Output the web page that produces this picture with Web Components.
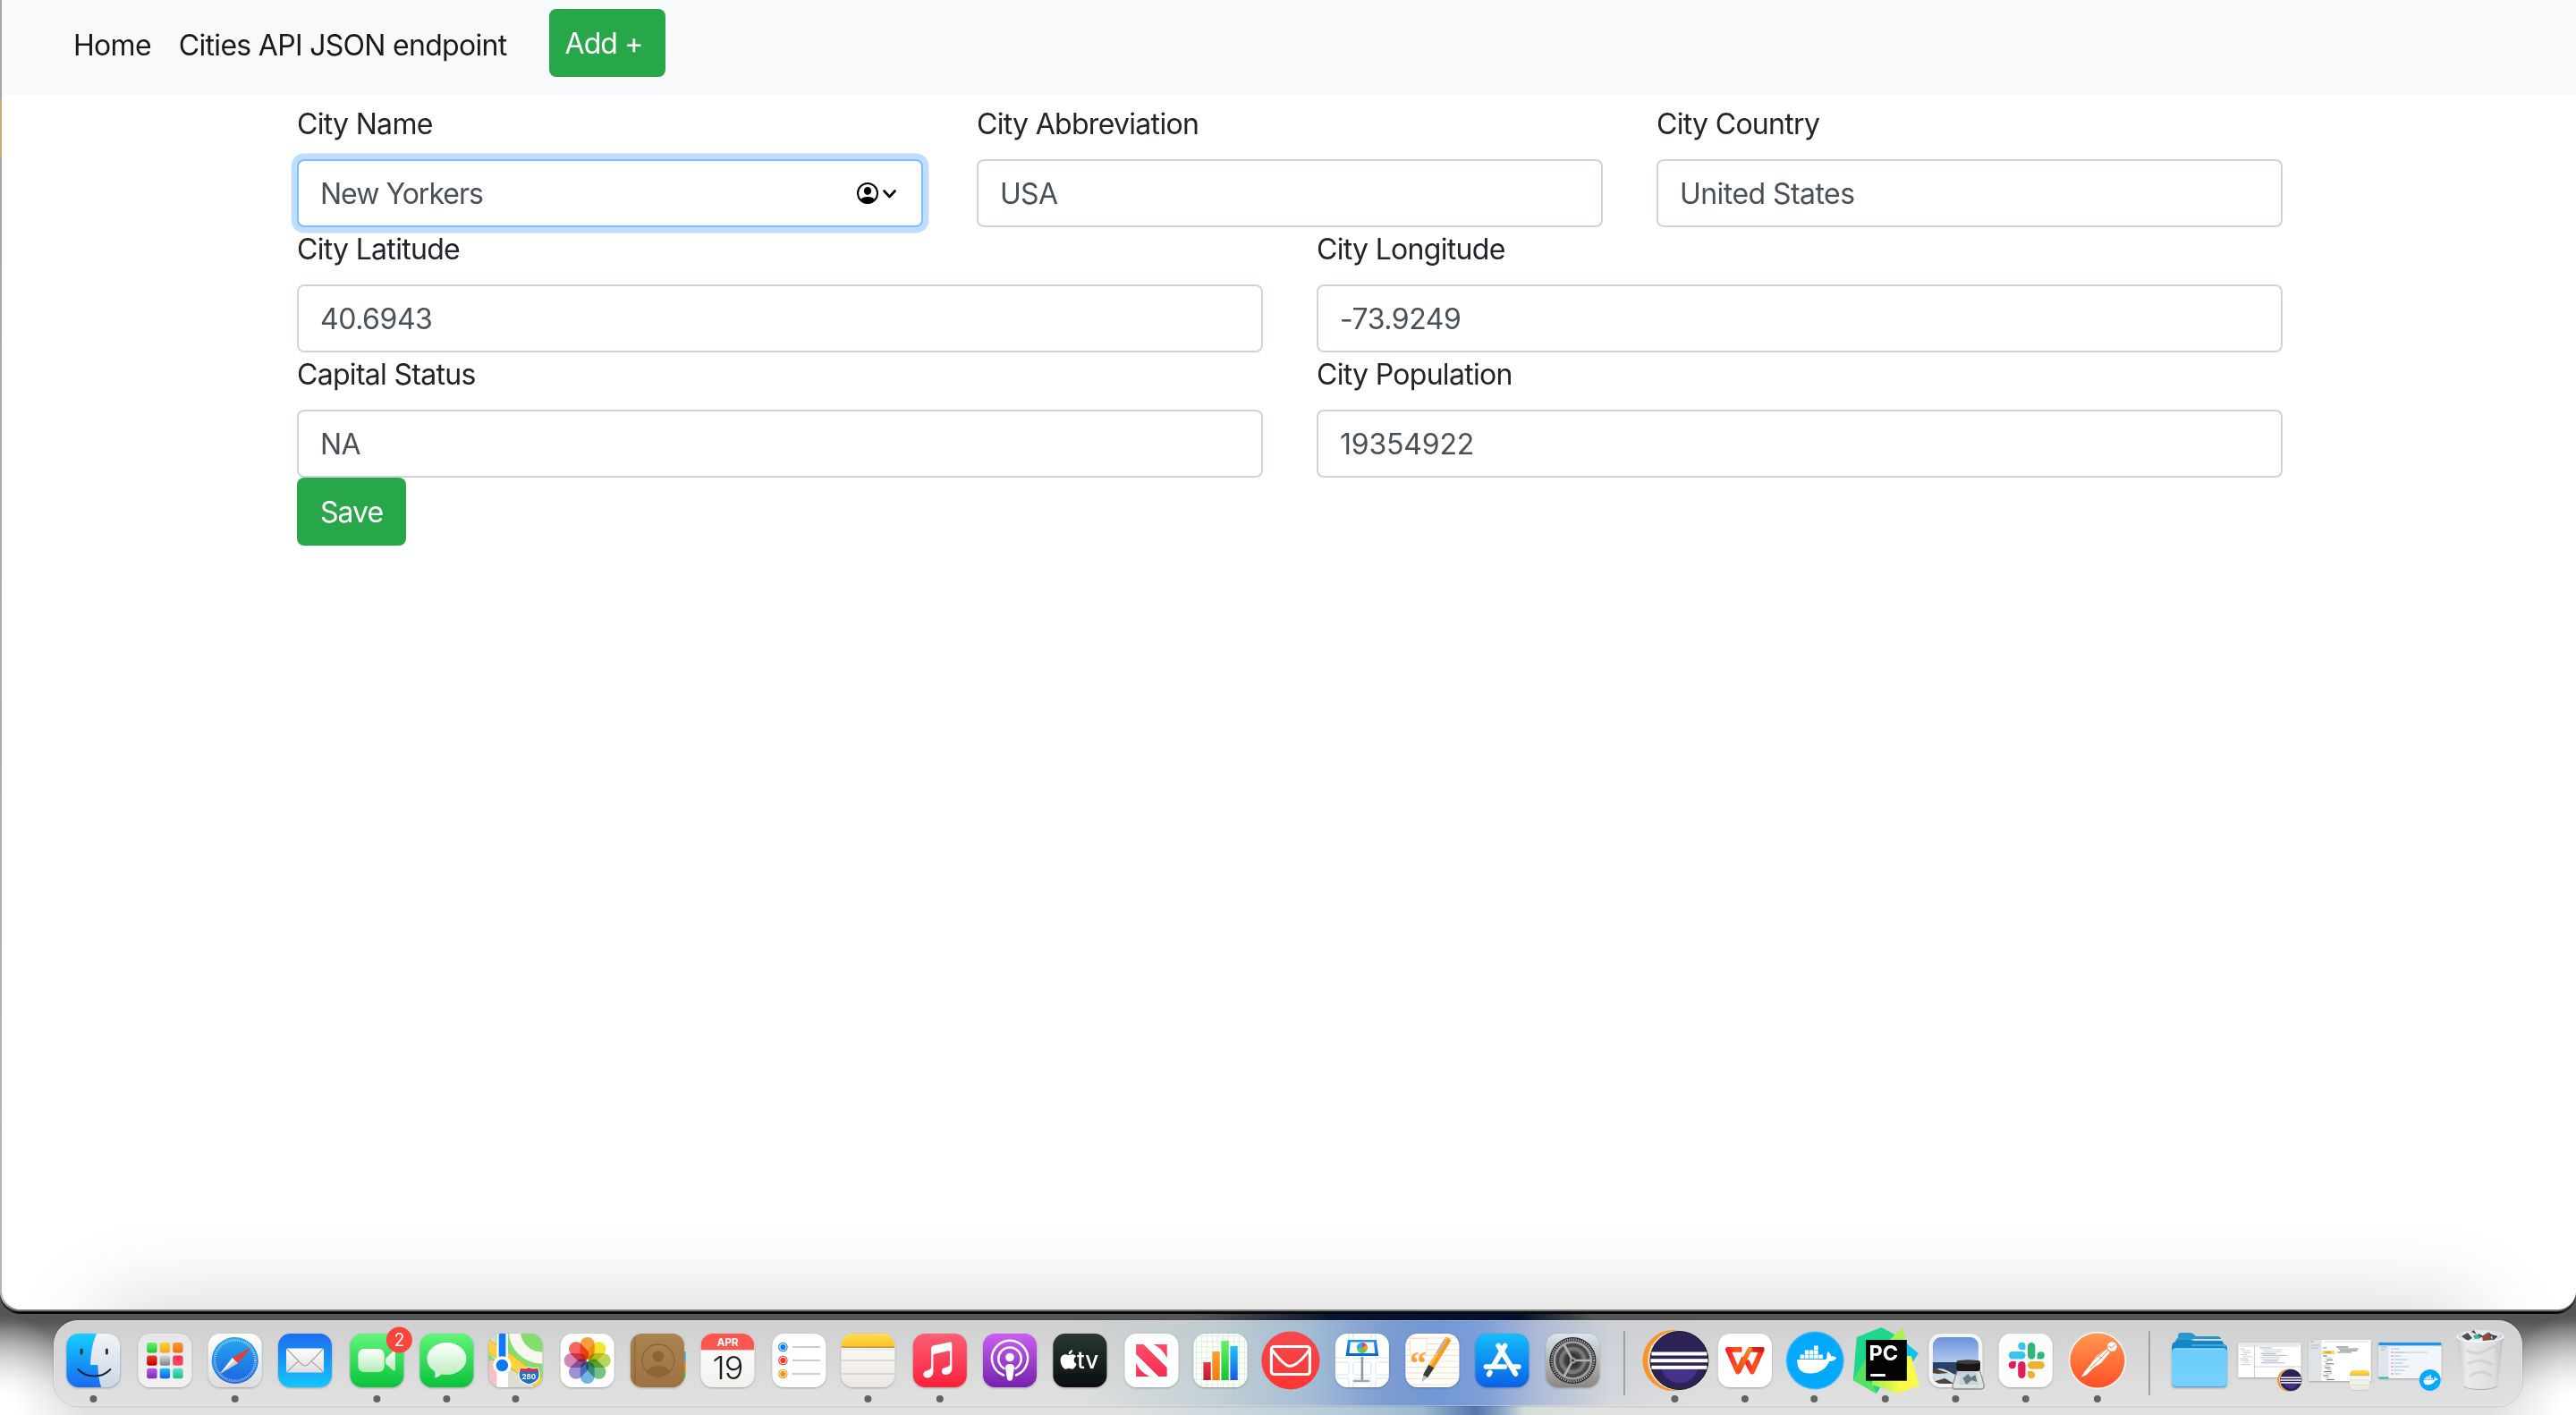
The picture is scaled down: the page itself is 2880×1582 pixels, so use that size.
<!DOCTYPE html>
<html lang="en">
<head>
<meta charset="utf-8">
<title>Cities</title>
<style>
html,body{margin:0;height:100%;overflow:hidden}
body{font-family:Inter,"Liberation Sans",sans-serif;font-size:32px;line-height:48px;color:#212529;letter-spacing:-.7px}
</style>
</head>
<body>
<desk-top>
  <app-window slot="window">
    <nav-bar>
      <nav-link>Home</nav-link>
      <nav-link>Cities API JSON endpoint</nav-link>
      <bs-button compact>Add +</bs-button>
    </nav-bar>
    <city-form>
      <form-row>
        <form-field label="City Name" value="New Yorkers" active style="--tracking:-1px"></form-field>
        <form-field label="City Abbreviation" value="USA" style="--tracking:-.7px"></form-field>
        <form-field label="City Country" value="United States" style="--tracking:-.55px"></form-field>
      </form-row>
      <form-row>
        <form-field label="City Latitude" value="40.6943"></form-field>
        <form-field label="City Longitude" value="-73.9249"></form-field>
      </form-row>
      <form-row>
        <form-field label="Capital Status" value="NA" style="--tracking:-.7px"></form-field>
        <form-field label="City Population" value="19354922" style="--tracking:-.2px"></form-field>
      </form-row>
      <bs-button>Save</bs-button>
    </city-form>
  </app-window>
  <mac-dock slot="dock">
    <dock-icon name="finder" running></dock-icon>
    <dock-icon name="launchpad" nudge="2"></dock-icon>
    <dock-icon name="safari" nudge="1.3" running></dock-icon>
    <dock-icon name="mail" nudge=".6"></dock-icon>
    <dock-icon name="facetime" nudge="2" running></dock-icon>
    <dock-icon name="messages" nudge="1" running></dock-icon>
    <dock-icon name="maps" running></dock-icon>
    <dock-icon name="photos" nudge="1.3"></dock-icon>
    <dock-icon name="contacts" nudge="1.5"></dock-icon>
    <dock-icon name="calendar"></dock-icon>
    <dock-icon name="reminders" nudge="1"></dock-icon>
    <dock-icon name="notes" running></dock-icon>
    <dock-icon name="music" nudge="1.4" running></dock-icon>
    <dock-icon name="podcasts" nudge=".6"></dock-icon>
    <dock-icon name="tv"></dock-icon>
    <dock-icon name="news" nudge="1"></dock-icon>
    <dock-icon name="numbers"></dock-icon>
    <dock-icon name="redmail" nudge="-.5"></dock-icon>
    <dock-icon name="keynote" nudge=".5"></dock-icon>
    <dock-icon name="pages"></dock-icon>
    <dock-icon name="appstore" nudge="-1"></dock-icon>
    <dock-icon name="settings"></dock-icon>
    <dock-separator></dock-separator>
    <dock-icon name="eclipse" running></dock-icon>
    <dock-icon name="wps" nudge="-.5" running></dock-icon>
    <dock-icon name="docker" nudge="-1.2" running></dock-icon>
    <dock-icon name="pycharm" nudge="-.6" running></dock-icon>
    <dock-icon name="preview" nudge="-1" running></dock-icon>
    <dock-icon name="slack" nudge="-1.6" running></dock-icon>
    <dock-icon name="postman" nudge="-.5" running></dock-icon>
    <dock-separator></dock-separator>
    <dock-icon name="folder" nudge=".6"></dock-icon>
    <dock-icon name="winEclipse"></dock-icon>
    <dock-icon name="winNotes" nudge=".8"></dock-icon>
    <dock-icon name="winDocker"></dock-icon>
    <dock-icon name="trash" nudge="-.5"></dock-icon>
  </mac-dock>
</desk-top>
<script>
function define(name, html) {
  customElements.define(name, class extends HTMLElement {
    constructor() {
      super();
      this.attachShadow({mode: 'open'}).innerHTML = typeof html === 'function' ? html(this) : html;
    }
  });
}

define('desk-top', `<style>
:host{display:flex;flex-direction:column;width:2880px;height:1582px;overflow:hidden;
 background:
 radial-gradient(ellipse 95px 112px at 0 1582px,#fff 20%,rgba(255,255,255,0) 100%),
 radial-gradient(ellipse 95px 112px at 2880px 1582px,#fff 20%,rgba(255,255,255,0) 100%),
 linear-gradient(90deg,transparent 1340px,rgba(0,14,44,.9) 1490px,rgba(0,14,44,.95) 1700px,transparent 1780px) 0 1469px/2880px 8px no-repeat,
 linear-gradient(90deg,transparent 1250px,rgba(190,208,218,.7) 1400px,#b5cbd9 1500px,#9db9cf 1590px,#5576ac 1650px,#8fa9c9 1680px,#d4dfd6 1705px,transparent 1780px) 0 1572px/2880px 10px no-repeat,
 linear-gradient(#565555 1466px,#565555 1477px,#8c8c8c 1505px,#d0d0d0 1550px,#dedede 1572px,#e2e2e2 1582px)}
</style><slot name="window"></slot><slot name="dock"></slot>`);

define('app-window', `<style>
:host{display:block;height:1469px;margin-bottom:7px;flex:none;border-radius:0 0 22px 22px;overflow:hidden;
 background:linear-gradient(#a6a6a6 0,#a6a6a6 112px,#c3b27f 112px,#c3b27f 176px,#a6a6a6 176px,#a9a9a9 1445px,#232324 1452px,#232324 1466px,#080808 1467px)}
.rim{height:1466px;border-radius:0 0 22px 22px;background:linear-gradient(#a6a6a6 0,#a6a6a6 112px,#c3b27f 112px,#c3b27f 176px,#a6a6a6 176px,#b5b5b5 1455px,#77787a 1465px)}
.page{box-sizing:border-box;position:relative;height:1464px;margin-left:2px;border-radius:0 0 21px 21px;overflow:hidden;background:#fff}
.page::after{content:"";position:absolute;left:110px;right:110px;bottom:-80px;height:80px;box-shadow:0 0 100px rgba(0,0,0,.2)}
</style><div class="rim"><div class="page"><slot></slot></div></div>`);

define('nav-bar', `<style>
:host{display:flex;align-items:flex-start;box-sizing:border-box;height:106px;padding:10px 80px;background:#f8f9fb;color:#191919}
</style><slot></slot>`);
define('nav-link', `<style>:host{display:block;padding:17px 0 15px;margin-right:31px;white-space:nowrap}
:host(:nth-of-type(2)){margin-right:47px}</style><slot></slot>`);
define('bs-button', `<style>
:host{display:block;box-sizing:border-box;width:max-content;height:76px;padding:15px 26px 13px;border-radius:8px;background:#28a74a;color:#fff;white-space:nowrap;letter-spacing:-1px}
:host([compact]){padding:15px 0 13px 18px;width:130px;letter-spacing:-.9px}
</style><slot></slot>`);
define('city-form', `<style>:host{display:block;padding:8px 0 0 330px;width:2220px}</style><slot></slot>`);
define('form-row', `<style>:host{display:flex;gap:60px}</style><slot></slot>`);
define('form-field', el => `<style>
:host{display:block;flex:1 1 0;min-width:0}
label{display:block;padding-top:1px;margin-bottom:15px}
.box{display:flex;align-items:center;justify-content:space-between;box-sizing:border-box;height:76px;padding:0 28px 0 24px;border:2px solid #ced4da;border-radius:8px;background:#fff;color:#495057}
.box span{padding-top:2px;letter-spacing:var(--tracking,-.45px)}
:host([active]) .box{border-color:#80bdff;box-shadow:0 0 0 6.4px #bfdeff}
</style><label>${el.getAttribute('label')}</label><div class="box"><span>${el.getAttribute('value')}</span>${el.hasAttribute('active') ? `
<svg width="46" height="26" viewBox="0 0 46 26"><defs><clipPath id="p"><circle cx="14" cy="13" r="11.5"/></clipPath></defs>
<circle cx="14" cy="13" r="11" fill="#fff" stroke="#000" stroke-width="2"/><ellipse cx="14" cy="10.4" rx="4.1" ry="4.5"/><ellipse cx="14" cy="21.6" rx="8.2" ry="4.7" clip-path="url(#p)"/>
<path d="M32.500 10.500 38.500 17 44.500 10.500" fill="none" stroke="#000" stroke-width="2.600" stroke-linecap="round" stroke-linejoin="round"/></svg>` : ''}</div>`);

define('mac-dock', `<style>
:host{display:flex;box-sizing:border-box;width:2760px;height:96px;margin-left:60px;padding-left:4.6px;flex:none;border-radius:27px;
 box-shadow:inset 0 0 0 1px rgba(255,255,255,.3),0 0 2px rgba(0,0,0,.35);
 background:linear-gradient(90deg,transparent 1130px,rgba(184,202,208,.7) 1300px,rgba(160,186,212,.9) 1400px,#7c9cd2 1490px,#7297d4 1550px,#7f9fd8 1600px,rgba(170,184,214,.9) 1660px,rgba(200,206,214,.5) 1740px,transparent 1860px),linear-gradient(#d0d0d0,#e1e1e1)}
</style><slot></slot>`);
define('dock-separator', `<style>:host{display:flex;flex:none;width:34.600px;height:96px;align-items:center;justify-content:center}
i{width:2px;height:72px;margin-left:2px;background:#a0a1a3}</style><i></i>`);

const grad = (id, a, b) => `<linearGradient id="${id}" x1="0" y1="0" x2="0" y2="1"><stop stop-color="${a}"/><stop offset="1" stop-color="${b}"/></linearGradient>`;
const tile = fill => `<rect x="-30" y="-30" width="60" height="60" rx="13.500" fill="${fill}" filter="url(#sh)"/>`;
const line = (x1, y1, x2, y2, c, w) => `<path d="M${x1} ${y1}L${x2} ${y2}" stroke="${c}" stroke-width="${w}"/>`;
const range = (n, f) => Array.from({length: n}, (_, i) => f(i)).join('');

const eclipse = `<circle cx="-2" cy="0" r="34" fill="#f7952c"/><circle cx="3" cy="0" r="33.300" fill="#e9dccb"/>
<circle cx="5" cy="0" r="32.500" fill="#2c2255" stroke="#15121f" stroke-width="1"/><path d="M-15 9H26A21 21 0 0 1 -15 9Z" fill="#463188"/>
<g fill="#fff"><rect x="-26" y="-9.500" width="62" height="4"/><rect x="-27" y="-1.800" width="64" height="4"/><rect x="-26" y="5.800" width="62" height="4"/></g>`;
const docker = `<circle cx="1" cy="0" r="32.500" fill="#3cb8f8"/><circle cx="1" cy="0" r="31" fill="#03a9fd"/>
<path fill="#fff" d="M-19-1H12C16-1 13-6 15.500-10 18-8 19-6 19-4.500 22-5.500 24-4 25-3 24 0 20 1 17 1 14 9 6 14.500-5 14.500-15 14.500-19 9-19-1Z"/>
<g fill="#fff">${range(5, i => `<rect x="${-15.700 + i * 5.200}" y="-6.500" width="4.600" height="4.600"/>`)}${range(3, i => `<rect x="${-10.500 + i * 5.200}" y="-11.500" width="4.600" height="4.600"/>`)}<rect x="-.1" y="-16.500" width="4.600" height="4.600"/></g>`;
const notes = `${grad('nb', '#fefefe', '#ebe8e0')}${grad('ny', '#ffdb52', '#fdc322')}${tile('url(#nb)')}<g clip-path="url(#c)"><rect x="-30" y="-30" width="60" height="15" fill="url(#ny)"/><rect x="-30" y="-15.500" width="60" height="1.500" fill="#b99a4a"/>
<path d="M-30-12H30" stroke="#bbb" stroke-width="1" stroke-dasharray="1 1.500"/>${line(-30, 0, 30, 0, '#d2d1cd', 1.500)}${line(-30, 15, 30, 15, '#d2d1cd', 1.500)}</g>`;
const petals = ['#f98a10', '#f3dc06', '#a9cf34', '#57b46a', '#55a3dc', '#8a7cc8', '#cc6aa6', '#f4423a'];
const tinyRows = (x, y, n, step, w, cols) => range(n, i => line(x + (i * 7) % 5, y + i * step, x + (i * 7) % 5 + w * (0.5 + ((i * 37) % 50) / 100), y + i * step, cols[i % cols.length], 0.9));

const ICONS = {
finder: () => `${grad('a', '#12cefc', '#1c69f3')}${grad('b', '#f2f3f7', '#cdd7e5')}${tile('url(#a)')}<path clip-path="url(#c)" fill="url(#b)" d="M3.700-30C-1-20-3-8-3.300 5H5C5 14 6.500 23 8.700 30H31V-31Z"/>
<path d="M-13.300-12V-8M15-12V-8" stroke="#26303f" stroke-width="3" stroke-linecap="round"/><path d="M-17 10C-8 20 10 20 19 10" fill="none" stroke="#1c2533" stroke-width="2" stroke-linecap="round"/>`,
launchpad: () => `${grad('a', '#e6e6e8', '#f2f2f2')}${tile('url(#a)')}` + [['#6ff06a', '#1fc53a'], ['#fcd02f', '#f9a91b'], ['#fb9a25', '#ee6f1c'], ['#f0382b', '#b80000'], ['#cfdde0', '#7c7f80'], ['#fb2c5c', '#fb4a62'], ['#b95ce0', '#7a2bb0'], ['#16c3fa', '#1d5ae8'], ['#55e0cc', '#1dbb88']].map((g, i) => grad('g' + i, ...g) + `<rect x="${-20.200 + (i % 3) * 14.500}" y="${-20 + Math.floor(i / 3) * 14.400}" width="11.400" height="11.400" rx="2.500" fill="url(#g${i})"/>`).join(''),
safari: () => `${grad('a', '#fff', '#dcdcdc')}${grad('b', '#23a9ee', '#1e63df')}${tile('url(#a)')}<circle r="26" fill="url(#b)"/><circle r="22.800" fill="none" stroke="#d8ecfb" stroke-width="3" stroke-dasharray=".8 1.190" opacity=".75"/>
<path d="M18.700-15-3-3 3 3Z" fill="#ee3a30"/><path d="M-17 15-3-3 3 3Z" fill="#f4f4f4"/><path d="M-17 15 0 0 3 3Z" fill="#cfcfcf"/>`,
mail: () => `${grad('a', '#1b6cf1', '#15c5fd')}${grad('b', '#fdfdfd', '#dedede')}${tile('url(#a)')}<rect x="-21" y="-13.500" width="42" height="27" rx="2" fill="url(#b)"/><path d="M-20 12.500-7.500 1M20 12.500 7.500 1M-20-12.500-4 4Q0 7.500 4 4L20-12.500" fill="none" stroke="#a6a6a6" stroke-width="1.100"/>`,
facetime: () => `${grad('a', '#62f57c', '#0ac23a')}${grad('b', '#fff', '#b2ecb8')}${tile('url(#a)')}<rect x="-21" y="-13" width="29.300" height="26" rx="6.500" fill="url(#b)"/><path d="M10-2.500 18-10Q20.500-11.500 20.500-9V10Q20.500 12.500 18 11L10 4Q9 1 10-2.500Z" fill="url(#b)"/>
<circle cx="25" cy="-23" r="14.500" fill="#fd443a"/><text x="25" y="-16" text-anchor="middle" font-size="19.500" fill="#fff" letter-spacing="0">2</text>`,
messages: () => `${grad('a', '#60f57a', '#0ac23a')}${grad('b', '#fff', '#bfeec2')}${tile('url(#a)')}<path d="M-14 10Q-12 16-13.500 19.500-8 18.500-5 14Z" fill="#ddf5df"/><ellipse cy="-2" rx="22" ry="18" fill="url(#b)"/>`,
maps: () => `${tile('#7ddc6a')}<g clip-path="url(#c)"><rect x="-30" y="-30" width="60" height="60" fill="#84dd6c"/><path d="M-30-30H-22V0L-30-8Z" fill="#dcdad4"/><path d="M-30 0H-20V30H-30Z" fill="#f7bfc8"/><path d="M-9 8 30 30H-9Z" fill="#dedcd3"/>
<circle cx="29" cy="-33" r="30" fill="none" stroke="#f7f6f0" stroke-width="13"/><path d="M-33-18-9-2 36 32" stroke="#f3b51e" stroke-width="13" fill="none"/><path d="M-33-18-9-2 36 32" stroke="#fed23f" stroke-width="11" fill="none"/>
<rect x="-21" y="-31" width="12.500" height="62" fill="#fff"/><rect x="-18.700" y="-31" width="7.700" height="34" fill="#0a7bf5"/></g><circle cx="-15" cy="5.500" r="10.200" fill="#fff"/><circle cx="-15" cy="5.500" r="6.700" fill="#0a7bf5"/>
<path d="M6 8Q11 10 15 7.500 19 10 24.500 8 28 14 26 20 23 25 15 27 7 25 4.500 20 2 14 6 8Z" fill="#1f70c9" stroke="#fff" stroke-width="1.200"/><path d="M6 8.500Q11 10.500 15 8 19 10.500 24.500 8.500L26 12.500H4.500Z" fill="#e0312c"/><text x="15" y="21" text-anchor="middle" font-size="8" font-weight="700" fill="#fff" letter-spacing="0">280</text>`,
photos: () => tile('#fff') + `<g style="isolation:isolate">${petals.map((c, i) => `<rect x="-8" y="-26" width="16" height="25" rx="8" fill="${c}" opacity=".82" style="mix-blend-mode:multiply" transform="rotate(${i * 45})"/>`).join('')}</g>`,
contacts: () => `${grad('a', '#ab8350', '#9c7341')}<path d="M26-10H31V1H26Z" fill="#55b7ea"/><path d="M26 1H31V13H26Z" fill="#f79a28"/><path d="M26 13H31Q31 22 26 24Z" fill="#4fd06d"/><path d="M26-22Q31-18 31-10H26Z" fill="#ddd"/>
<rect x="-31" y="-30" width="60" height="60" rx="13" fill="url(#a)" filter="url(#sh)"/><path d="M-26-26V26" stroke="#8a6435" stroke-width="1.200"/><g fill="#8a6538"><circle cx="0" cy="-4.500" r="6.300"/><path d="M-13.500 11.500Q0 .500 13.500 11.500Q0 24-13.500 11.500Z"/></g><circle r="18" fill="none" stroke="#8a6538" stroke-width="1.300"/>`,
calendar: () => `${grad('a', '#fff', '#f1f1ee')}${tile('url(#a)')}<rect x="-30" y="-30" width="60" height="18.300" fill="#fb564f" clip-path="url(#c)"/><text y="-15.800" text-anchor="middle" font-size="12" font-weight="700" fill="#fff" letter-spacing="-.2">APR</text><text y="20.500" text-anchor="middle" font-size="36" font-weight="300" fill="#1e1e1e" letter-spacing="-1">19</text>`,
reminders: () => tile('#fff') + [['#0a7bf5', -15], ['#fb3128', 0], ['#f99408', 15]].map(([c, y]) => `<circle cx="-18" cy="${y}" r="4.700" fill="none" stroke="${c}" stroke-width="1.100"/><circle cx="-18" cy="${y}" r="3.100" fill="${c}"/>${line(-7.500, y, 23.500, y, '#c4c4c8', 1.700)}`).join(''),
notes: () => notes,
music: () => `${grad('a', '#fc5e76', '#fa223a')}${tile('url(#a)')}<path fill="#fff" d="M-9.700-13.500Q-9.700-16-7.500-16.500L11-20.400Q13.500-21 13.500-18.500V9.500C13.500 17 2 18 2 12 2 6.500 11.200 8.500 11.200 4.500V-9.500Q11.200-11 9.800-10.700L-6-7.300Q-7.400-7-7.400-5.500V12.500C-7.400 21-18.500 21.500-18.500 15.500-18.500 10-9.700 12-9.700 7.500Z"/>`,
podcasts: () => `${grad('a', '#ca5ff1', '#7422ad')}${tile('url(#a)')}<g fill="none" stroke="#fff" stroke-width="2.500" stroke-linecap="round"><path d="M-7 16.500A20 20 0 1 1 7 16.500"/><path d="M-6.500 9A12.700 12.700 0 1 1 6.500 9"/></g><circle cy="-3.500" r="4.800" fill="#fff"/><path d="M-5 8Q-5 4 0 4 5 4 5 8L3.200 20Q2.700 22.700 0 22.700-2.700 22.700-3.200 20Z" fill="#fff"/>`,
tv: () => `${grad('a', '#2a3833', '#0a0e10')}${tile('url(#a)')}<path transform="translate(-22 -13.400) scale(.048)" fill="#fff" d="M318.700 268.700c-.2-36.700 16.400-64.400 50-84.800-18.800-26.900-47.200-41.700-84.700-44.600-35.500-2.800-74.300 20.700-88.500 20.700-15 0-49.400-19.700-76.400-19.700C63.300 141.200 4 184.800 4 273.500q0 39.300 14.400 81.200c12.800 36.700 59 126.700 107.200 125.200 25.200-.6 43-17.900 75.800-17.900 31.800 0 48.300 17.900 76.400 17.900 48.600-.7 90.400-82.500 102.600-119.300-65.200-30.700-61.700-90-61.700-91.900zm-56.600-164.200c27.300-32.400 24.800-61.900 24-72.500-24.100 1.400-52 16.400-67.900 34.900-17.500 19.800-27.800 44.300-25.600 71.900 26.100 2 49.900-11.400 69.500-34.300z"/><text x="-3.500" y="9" font-size="26" font-weight="500" fill="#fff" letter-spacing="0">tv</text>`,
news: () => `${grad('a', '#fb4e6a', '#f92c50')}${tile('#fff')}<g fill="url(#a)"><path d="M-17.300-18H-9L17.300 8V18H8L-17.300-7Z"/><path d="M2-18H17.300V-2.500Q13-13 2-18Z"/><path d="M-17.300 2.500V18H-2Q-13 13-17.300 2.500Z"/></g>`,
numbers: () => tile('#fff') + `<g clip-path="url(#c)">${range(10, i => line(-27 + i * 6, -30, -27 + i * 6, 30, '#d3f2d4', .9) + line(-30, -27 + i * 6, 30, -27 + i * 6, '#d3f2d4', .9))}</g>${[['#e8394c', '#b91d33', 2], ['#fba02c', '#f27a12', -10], ['#6af06a', '#12c432', -22], ['#1fc6fb', '#1656e6', -16]].map(([a, b, y], i) => grad('n' + i, a, b) + `<rect x="${-19 + i * 10}" y="${y}" width="8.300" height="${22 - y}" fill="url(#n${i})"/>`).join('')}`,
redmail: () => `${grad('a', '#f34a4c', '#ff3433')}<circle r="32.500" fill="url(#a)"/><rect x="-21.500" y="-15.500" width="43" height="31" rx="3" fill="none" stroke="#fff" stroke-width="3.200"/><path d="M-21-12Q-8 5-2 6.200 1 6.800 4 5 12 1 21-12" fill="none" stroke="#fff" stroke-width="3"/>`,
keynote: () => `${grad('a', '#2596f3', '#0b63cf')}${tile('#fff')}<g clip-path="url(#c)" fill="none" stroke="#cfe4f6" stroke-width="1"><rect x="-10" y="-16" width="20" height="14" rx="2"/><rect x="-10" y="2" width="20" height="14" rx="2"/><rect x="-40" y="2" width="25" height="14" rx="2"/><rect x="15" y="2" width="25" height="14" rx="2"/><path d="M-10 30V22Q-10 20-8 20H8Q10 20 10 22V30M-30 20H-15V30M30 20H15V30M-15-30V-3H-30M15-30V-3H30M-10-30V-24M10-30V-24"/></g>
<rect x="-1.300" y="-4" width="2.600" height="26" fill="#8f959c"/><rect x="-10" y="21.800" width="18.500" height="2.400" rx="1" fill="#a4a8ad"/><path d="M-16-23H16L18.300-5H-18.300Z" fill="url(#a)"/><path d="M-13-20.500H13L14.500-8H-14.500Z" fill="#f5fafe"/>
<circle cy="-14" r="6" fill="#5ac85a"/><path d="M0-14V-20A6 6 0 0 1 5.500-11.500Z" fill="#fb9a2a"/><path d="M0-14H-6A6 6 0 0 1 0-20Z" fill="#38a6ee"/><path d="M0-14V-20A6 6 0 0 1 5-17Z" fill="#d8456c"/>`,
pages: () => tile('#fff') + `<g clip-path="url(#c)">${range(9, i => line(-30, -25 + i * 6.500, 30, -25 + i * 6.500, '#fbdcc0', 1))}<rect x="-25" y="-24.500" width="18.500" height="17.500" fill="#fff" stroke="#fbdcc0" stroke-width="1"/></g><text x="-25.500" y="16" font-family="Liberation Serif" font-size="38" font-weight="700" fill="#fba13a" letter-spacing="0">“</text>
<g transform="translate(17.700 -24) rotate(31.500)"><rect x="-3.600" y="-1" width="7.200" height="39" rx="2" fill="#f69c1c"/><rect x="-3.600" y="0" width="2.600" height="37" fill="#fcc35c"/><rect x="-3.600" y="2" width="2.200" height="18" fill="#a9b3bb"/><path d="M-3.600 36H3.600L3 49H-3Z" fill="#3b3b3d"/><path d="M-2.600 49H2.600L0 57Z" fill="#b9bdc1"/></g>`,
appstore: () => `${grad('a', '#12bdfb', '#1060e8')}${tile('url(#a)')}<g stroke="#fff" stroke-width="5.600" stroke-linecap="round" fill="none"><path d="M3.200-16.500-9.500 5.500M-4.200-16.500 15 15M-18 7H3M12 7H18.500M-13.500 13.500-14.700 15.500"/></g>`,
settings: () => `${grad('a', '#d9e6ec', '#8c8680')}${tile('url(#a)')}<circle r="26" fill="#2a2b2d"/><circle r="23.500" fill="none" stroke="#a7a7a7" stroke-width="2.600" stroke-dasharray="1.300 1.160"/><circle r="20.500" fill="#4a4a4a" stroke="#a2a2a2" stroke-width="2.600"/><circle r="13" fill="none" stroke="#777" stroke-width="4.500"/><circle r="8" fill="#353536"/><path d="M0 0H20M0 0-10-18M0 0-10 18" stroke="#b3b3b3" stroke-width="2.600"/><circle r="3.500" fill="#9b9b9b"/><circle r="1.300" fill="#222"/>`,
eclipse: () => eclipse,
wps: () => `<linearGradient id="w"><stop stop-color="#fd1f2b"/><stop offset=".55" stop-color="#f85a1c"/><stop offset="1" stop-color="#fb2a1e"/></linearGradient>${grad('w2', '#f98a2a', '#fb4215')}${tile('#fff')}
<path d="M-3.500-12.200H-19L-8 12.500-1-3" fill="none" stroke="url(#w)" stroke-width="5.800" stroke-linejoin="round"/><path d="M4-12.200H19L8 12.500 1.500 0" fill="none" stroke="url(#w)" stroke-width="5.800" stroke-linejoin="round"/><path d="M-10.500 12.500 2-12Q3.500-15 7-15H9.500L-5 14Z" fill="url(#w2)"/><path d="M7-15H21L20-9.300H10Z" fill="#b01414" opacity=".65"/>`,
docker: () => docker,
pycharm: () => `<linearGradient id="b"><stop stop-color="#9df04e"/><stop offset=".6" stop-color="#fbf84c"/></linearGradient><path d="M-32-26-4.500-37 14-27 5 15-10 37-36 22Z" fill="#1dd88c"/><path d="M-36 22-21-3V22L-14 27-10 37Z" fill="#55e25e"/><path d="M19-37 23-22H4Z" fill="#a9f052"/><path d="M20-22 37-8 28 6 18 10Z" fill="#08c4ee"/><path d="M24-5H29L38 28 14 37-15 27V20H24Z" fill="url(#b)"/>
<rect x="-21.700" y="-23" width="45.700" height="45.700" fill="#050505"/><rect x="-16.500" y="15" width="16.500" height="3" fill="#fff"/><text x="-18.300" y="0" font-size="23.500" font-weight="700" fill="#fff" letter-spacing="0">PC</text>`,
preview: () => `${grad('a', '#6b93d8', '#b4cbef')}${tile('#f4f4f4')}<clipPath id="k"><rect x="-25.500" y="-26" width="51" height="52" rx="9"/></clipPath><g clip-path="url(#k)"><rect x="-26" y="-26" width="52" height="29" fill="url(#a)"/><rect x="-26" y="2" width="52" height="25" fill="#27416f"/><path d="M-26 12Q-18 6-8 12T10 18L26 12V27H-26Z" fill="#cfdfe8"/><path d="M-26 8-14 12-8 14-20 15-26 14ZM-26 24-12 20-2 26H-26ZM-8 7 2 10-6 12Z" fill="#4f4238"/></g>
<path d="M2 11H27L32 28Q32 32 28 32H0Q-4 32-3.500 28Z" fill="#dfe3e3" opacity=".88" stroke="#858889" stroke-width="1.300"/><path d="M6 14H23L26 27H3Z" fill="#c9d3d7"/><path d="M8 20 14 15 17 19 22 16 24 24 18 22 12 27Z" fill="#485d6d" opacity=".75"/><rect x="1" y="0" width="26.500" height="12" rx="3" fill="#161616"/><ellipse cx="14.200" cy="1.800" rx="13" ry="2.500" fill="#3c3c3c"/>`,
slack: () => tile('#fcfcfc') + `<g fill="#36c5f0"><rect x="-19" y="-10" width="18.700" height="8.400" rx="4.200"/><path d="M-.3-12H-4.500A4.100 4.100 0 1 1-.3-16Z"/></g><g fill="#2eb67d"><rect x="2.200" y="-20" width="8.300" height="18.600" rx="4.150"/><path d="M12.800-1.500V-5.500A4.100 4.100 0 1 1 17-1.500Z"/></g><g fill="#ecb22e"><rect x="2.200" y="1" width="18.800" height="8.500" rx="4.200"/><path d="M2.200 12H6.300A4.100 4.100 0 1 1 2.200 16Z"/></g><g fill="#e01e5a"><rect x="-8.600" y="1" width="8.300" height="19" rx="4.150"/><path d="M-11 1V5A4.100 4.100 0 1 1-15 1Z"/></g>`,
postman: () => `${grad('a', '#ff9850', '#ff5026')}<circle r="32.300" fill="#fdf3ee"/><circle r="30.500" fill="url(#a)"/><circle cx="16.500" cy="-15.500" r="5.300" fill="#fff"/><path d="M12-16 16-14 20-18" stroke="#ff7d45" stroke-width="1" fill="none"/><path d="M10-13 14-9 4 3-4 8-12 16-18 18.500-14 12-8 5-1-5Z" fill="#fff"/><path d="M12-11-8 9M10-13-6 1M2-5 5-2" stroke="#ff7d45" stroke-width="1"/>`,
folder: () => `${grad('a', '#6ccbfa', '#76d2fc')}<path d="M-24-28Q-24-31-20-31H-11Q-8-31-6-29L-4-27H20Q24-27 24-24H-24Z" fill="#2a97cf"/><path d="M-27-20Q-27-25-23-25H-11L-6-22H23Q27-22 27-18V-10H-27Z" fill="#1384c5"/><path d="M-27-21Q-26-24-22-24H-11L-7-22" fill="none" stroke="#4fb4e6" stroke-width="1"/><path d="M-31-14Q-31-21-26-21H-12L-7-18H27Q31-18 31-13V0H-31Z" fill="#1089cb"/><path d="M-9-17H26Q29-17 29-15" fill="none" stroke="#6cc5ef" stroke-width="1.200"/><rect x="-31" y="-13.500" width="62" height="43.500" rx="4" fill="url(#a)" filter="url(#sh)"/><path d="M-28-13H28" stroke="#b5e6fd" stroke-width="1"/><path d="M-30 27Q-29 29.500-26 29.500H26Q29 29.500 30 27" stroke="#4aa9d9" stroke-width="1" fill="none"/>`,
winEclipse: () => `<rect x="-35" y="-20" width="70" height="39" fill="#fff" filter="url(#sh)"/><rect x="-35" y="-20" width="70" height="3" fill="#e8e8e8"/>${line(-17, -17, -17, 19, '#b8cbe6', 1)}${line(-34, -16, 33, -16, '#c7cdd5', .8)}${line(-17, 7, 35, 7, '#cdd3da', 1)}${line(-34, 0, -18, 0, '#ddd', .7)}${tinyRows(-33, -13, 9, 2.200, 11, ['#c3c8d0', '#d9cba6', '#b9c4d5'])}${tinyRows(-11, -14, 9, 2.100, 28, ['#b0a6da', '#cfcfcf', '#b3d3bf', '#949edd'])}<g transform="translate(22 22) scale(.37)">${eclipse}</g>`,
winNotes: () => `<rect x="-34.500" y="-23" width="69" height="46" fill="#fff" filter="url(#sh)"/><rect x="-34.500" y="-23" width="14" height="46" fill="#dfe3e8"/><path d="M-33-21H-29" stroke="#d88" stroke-width="1"/><path d="M-33-17H-23M-33-14H-24" stroke="#a8adb5" stroke-width=".8"/><rect x="-20" y="-11" width="14" height="4" fill="#fbd75c"/>${tinyRows(-19, -14, 2, 5, 8, ['#777'])}${tinyRows(-19, -5, 13, 2.200, 9, ['#555', '#bbb'])}${tinyRows(-4, -15, 4, 2, 26, ['#555', '#777'])}${line(-18, -21, 32, -21, '#ccc', .7)}<g transform="translate(22 22) scale(.37)">${notes}</g>`,
winDocker: () => `<rect x="-35" y="-20" width="70" height="40" fill="#f2f5f9" filter="url(#sh)"/><rect x="-35" y="-20" width="70" height="3.400" fill="#1f94ea"/><rect x="-35" y="-16.600" width="11" height="36" fill="#dde5ed"/><path d="M-33-15H-26M-33-12H-28" stroke="#9aabbd" stroke-width=".8"/>${range(8, i => line(-21, -13 + i * 4, -19, -13 + i * 4, i % 3 ? '#dc7f86' : '#b5c3d2', 1.400) + line(-18, -13 + i * 4, -12 + (i * 7) % 12, -13 + i * 4, '#9fbede', .9))}${line(-18, -9, 20, -9, '#a9c5e3', .8)}<rect x="-35" y="18.500" width="11" height="1.800" fill="#21c39a"/><g transform="translate(22 22) scale(.37)">${docker}</g>`,
trash: () => `<linearGradient id="a"><stop stop-color="#c4c4c4"/><stop offset=".2" stop-color="#ececec"/><stop offset=".8" stop-color="#dedede"/><stop offset="1" stop-color="#b8b8b8"/></linearGradient><ellipse cy="-27" rx="26" ry="6" fill="#d0d0d0" stroke="#f2f2f2" stroke-width="1"/>
<path d="M-23-27-15-33-8-30-6-35 3-32 9-34 15-31 22-28 16-20H-14Z" fill="#e9e9e9"/><path d="M-21-27-14-31-9-25-14-22ZM-2-30 4-27-4-24ZM9-32 14-28 8-23ZM-10-32-7-34-4-29Z" fill="#4d4d4f"/><path d="M-8-28-3-29 1-25-6-24Z" fill="#2fb99a"/><path d="M2-27 8-31 14-23 3-22Z" fill="#8d4a3c"/><path d="M13-29 20-27 14-22Z" fill="#35456e"/>
<path d="M-26-27Q-24-21 0-21T26-27L19.500 28Q18 33.500 0 33.500T-19.500 28Z" fill="url(#a)" opacity=".9"/><path d="M-15-12Q-5-4 8-12T18-8M-14 4Q0-4 14 5M-12 18Q2 8 13 18" fill="none" stroke="#c6c1c1" stroke-width="3" opacity=".5"/><path d="M-26-27Q-24-21 0-21T26-27" fill="none" stroke="#fafafa" stroke-width="1.300"/><path d="M-18.500 29Q-14 32.500 0 32.500T18.500 29" fill="none" stroke="#a9a9a9" stroke-width="1"/>`
};

define('dock-icon', el => `<style>:host{display:block;flex:none;width:78.800px;height:96px}svg{display:block;overflow:visible;font-family:Inter,"Liberation Sans",sans-serif}</style>
<svg width="78.800" height="96" viewBox="${-39.4 - Number(el.getAttribute('nudge') || 0)} -45 78.800 96"><defs><clipPath id="c"><rect x="-30" y="-30" width="60" height="60" rx="13.500"/></clipPath><filter id="sh" x="-20%" y="-20%" width="140%" height="140%"><feDropShadow dx="0" dy=".8" stdDeviation=".8" flood-color="#000" flood-opacity=".3"/></filter></defs>
${ICONS[el.getAttribute('name')]()}${el.hasAttribute('running') ? '<circle cy="43" r="4" fill="#636363"/>' : ''}</svg>`);
</script>
</body>
</html>
